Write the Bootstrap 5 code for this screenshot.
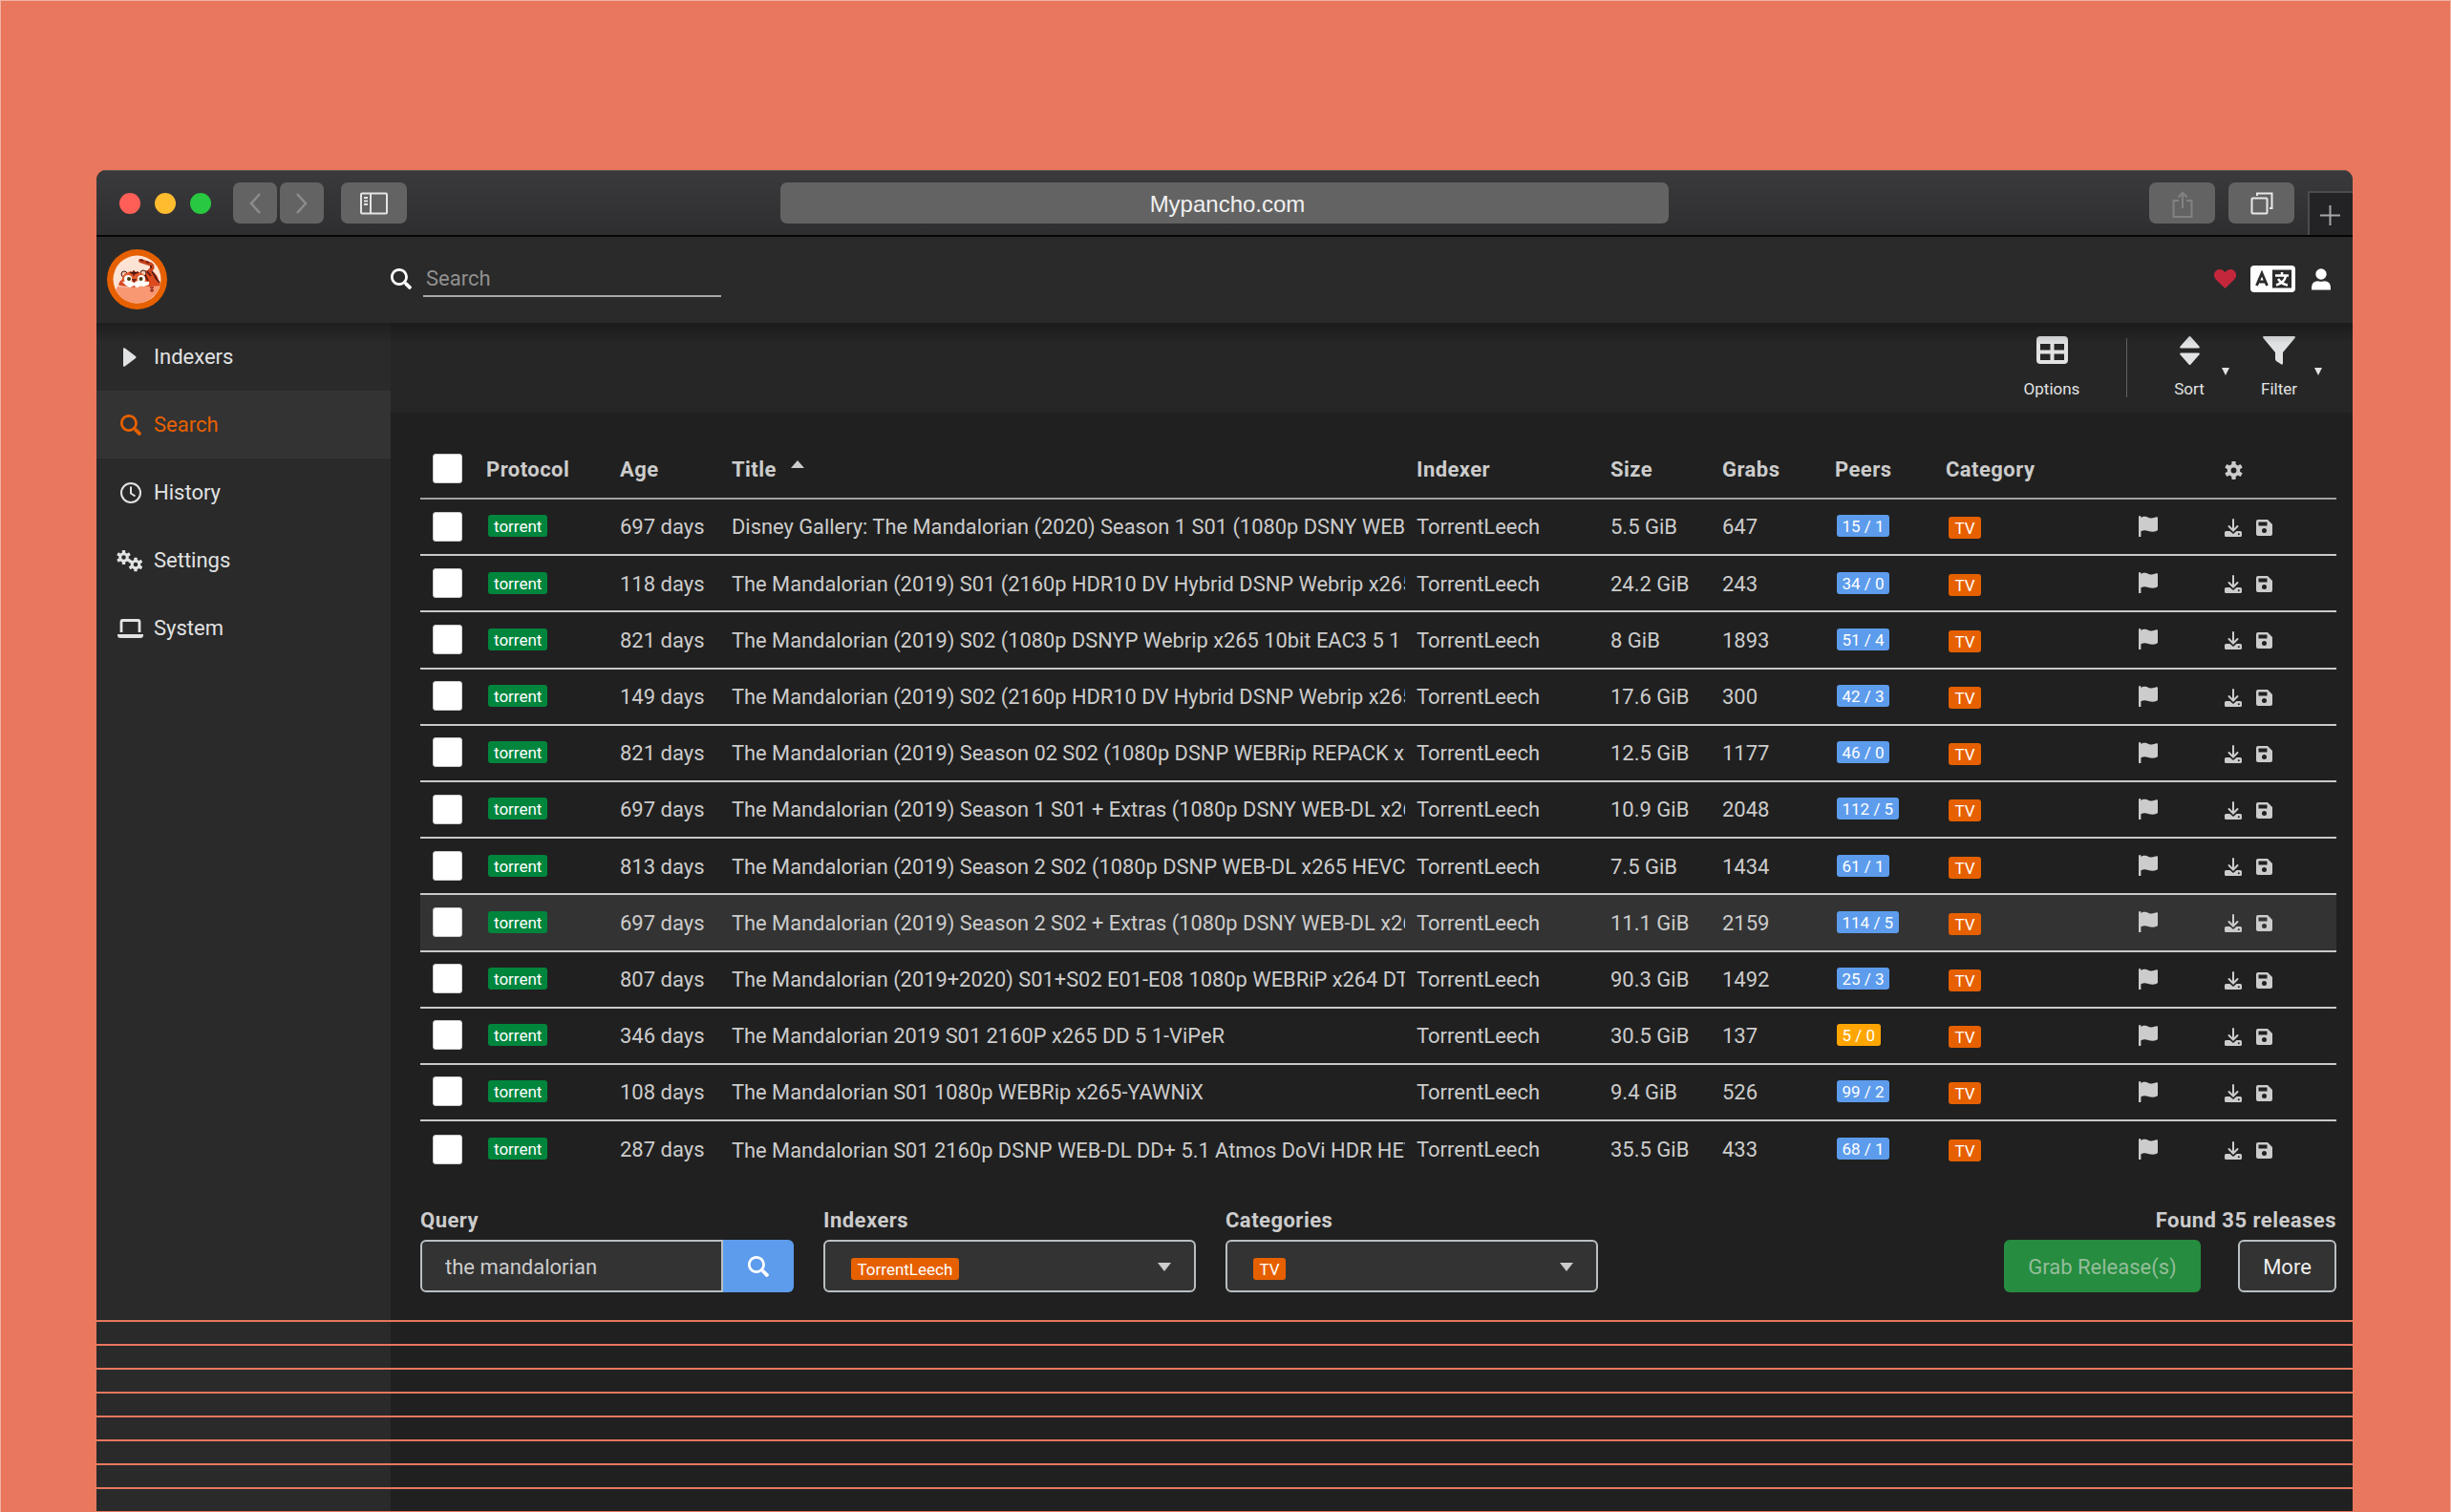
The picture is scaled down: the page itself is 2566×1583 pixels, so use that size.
<!DOCTYPE html>
<html lang="en">
<head>
<meta charset="utf-8">
<meta name="viewport" content="width=device-width, initial-scale=1">
<title>Mypancho.com</title>
<link href="https://cdn.jsdelivr.net/npm/bootstrap@5.3.0/dist/css/bootstrap.min.css" rel="stylesheet">
<style>
body{background:#e8775e;font-family:Roboto,"Open Sans",sans-serif;font-size:22px;line-height:1.2;color:#ccc;width:2566px;height:1583px;overflow:hidden;padding:178px 103px 0 101px;box-shadow:inset 1px 1px 0 #f0b3a5,inset -1px 0 0 #f0b3a5}
svg{display:block;flex:none}
.app-window{width:2362px;height:1405px;background:#202020;border-radius:10px 10px 0 0;overflow:hidden;position:relative}
.chrome{height:70px;background:linear-gradient(#3a3a3c,#2e2e30);border-top:1px solid #5a5353;border-bottom:2px solid #050505;padding-left:24px}
.dot{width:22px;height:22px;border-radius:50%;margin-right:15px}
.cbtn{height:43px;background:#636363;border-radius:7px;border:0}
.url{width:930px;height:43px;background:#636363;border-radius:7px;color:#f0f0f0;font:24px "Liberation Sans",Arial,sans-serif;padding:2px 0 0 6px}
.plus{width:47px;height:46px;background:#232326;border-left:2px solid #4c4c4f;border-top:2px solid #4c4c4f}
.topbar{height:90px;background:#2a2a2a;padding:0 23px 2px 11px}
.search-line{width:312px;height:39px;border-bottom:2px solid #a8a8a8;color:#909090;padding:7px 0 0 3px}
.side{width:308px;background:#2a2a2a;color:#e1e2e3;flex:none}
.side a{height:71px;color:inherit;text-decoration:none;padding-left:17px;padding-top:1px}
.side a.on{background:#333;color:#e66000}
.side .ic{width:43px;padding-right:5px}
.shade{position:absolute;top:160px;left:0;right:0;height:22px;background:linear-gradient(rgba(0,0,0,.28),rgba(0,0,0,0))}
.tools{height:94px;background:#262626;color:#e1e2e3;font-size:17px}
.tool{height:94px;padding-top:14px}
.tool .lbl{margin-top:16px;line-height:20px}
.content-pad{padding:0 17px 0 31px}
.rels{width:2006px;table-layout:fixed;border-collapse:separate;border-spacing:0;margin:0;white-space:nowrap}
.rels th{height:91px;padding:32px 0 0 0;border-bottom:2px solid #a0a0a0;font-weight:700;letter-spacing:.45px;vertical-align:middle}
.rels td{height:59.2px;padding:2px 0 0;border-bottom:2px solid #c9c9c9;vertical-align:middle}
.rels tr:last-child td{border-bottom:0}
.rels tr.hov td{background:#333}
.rels td:first-child{padding-top:0}
.rels th:first-child{padding-top:28px}
.box{width:31px;height:31px;background:#fff;border:1px solid #ccc;border-radius:3px;margin-left:12.500px;margin-top:-1px}
.tag{display:inline-block;font-size:17px;line-height:24px;height:23px;color:#fff;border-radius:3px;padding:0 5.500px;vertical-align:top}
.g{background:#00853d;padding:0 6px}.b{background:#5d9cec}.w{background:#ffa500}.o{background:#e66000}
.cut{width:705px;overflow:hidden;font-size:21.850px}
.field{height:55px;background:#333;border:2px solid #b9bfc2;border-radius:6px}
.lab{font-weight:700;letter-spacing:.48px;height:34px;line-height:28px}
.stripes{position:absolute;left:0;right:0;top:1204px;height:201px;background:repeating-linear-gradient(#e8775e 0 2px,transparent 2px 25px)}
</style>
</head>
<body>
<svg width="0" height="0" style="position:absolute"><defs>
<symbol id="mag" viewBox="0 0 512 512"><path fill="currentColor" d="M505 442.700L405.300 343c-4.500-4.500-10.600-7-17-7H372c27.600-35.300 44-79.700 44-128C416 93.100 322.900 0 208 0S0 93.100 0 208s93.100 208 208 208c48.300 0 92.700-16.400 128-44v16.300c0 6.400 2.500 12.500 7 17l99.700 99.700c9.400 9.400 24.600 9.400 33.900 0l28.300-28.300c9.400-9.400 9.400-24.600.1-34zM208 352c-79.500 0-144-64.500-144-144S128.500 64 208 64s144 64.500 144 144-64.500 144-144 144z"/></symbol>
<symbol id="cog" viewBox="-12 -12 24 24"><g fill="currentColor"><path fill-rule="evenodd" d="M0-8.500A8.500 8.500 0 1 1 0 8.500 8.500 8.500 0 0 1 0-8.500ZM0-3.700A3.700 3.700 0 1 0 0 3.700 3.700 3.700 0 0 0 0-3.700Z"/><g id="teeth"><rect x="-2.700" y="-12" width="5.400" height="5" rx="1"/><rect x="-2.700" y="7" width="5.400" height="5" rx="1"/></g><use href="#teeth" transform="rotate(60)"/><use href="#teeth" transform="rotate(120)"/></g></symbol>
<symbol id="flag" viewBox="0 0 20 22"><path fill="currentColor" d="M0 1.200A1.200 1.200 0 0 1 2.400 1.200V2.100C5-.2 8 .9 10.500 1.900 13.500 3 16 2.300 18.600 1.300Q20 .9 20 2.200V14.500Q20 15.300 19 15.700C16 17.100 13 16.900 10 15.900 7.300 15 5 14.900 2.400 16.300V21.500Q2.400 22 1.800 22H.6Q0 22 0 21.400Z"/></symbol>
<symbol id="dl" viewBox="0 0 18 19"><path fill="none" stroke="currentColor" stroke-width="2" stroke-linecap="round" d="M9 1V12M4.500 8 9 12.500 13.500 8"/><path fill="currentColor" fill-rule="evenodd" d="M1.500 13H5.500L9 16 12.500 13H16.500Q18 13 18 14.500V17.500Q18 19 16.500 19H1.500Q0 19 0 17.500V14.500Q0 13 1.500 13ZM14.800 15.200A1 1 0 1 0 14.800 17.200 1 1 0 1 0 14.800 15.200Z"/></symbol>
<symbol id="sv" viewBox="0 0 17 17"><path fill="currentColor" fill-rule="evenodd" d="M2 0H12L17 5V15Q17 17 15 17H2Q0 17 0 15V2Q0 0 2 0ZM2.500 2.500V6.500H11.500V2.500ZM8.500 9A2.500 2.500 0 1 0 8.500 14 2.500 2.500 0 1 0 8.500 9Z"/></symbol>
</defs></svg>
<div class="app-window">
 <div class="chrome d-flex align-items-center">
  <div class="dot" style="background:#ff5f57"></div><div class="dot" style="background:#febc2e"></div><div class="dot" style="background:#28c840"></div>
  <div class="cbtn d-flex align-items-center justify-content-center" style="width:46px;margin-left:8px"><svg width="14" height="24" fill="none" stroke="#8c8c8c" stroke-width="2.500"><path d="M12 2 3 12 12 22"/></svg></div>
  <div class="cbtn d-flex align-items-center justify-content-center" style="width:46px;margin-left:3px"><svg width="14" height="24" fill="none" stroke="#8c8c8c" stroke-width="2.500"><path d="M2 2 11 12 2 22"/></svg></div>
  <div class="cbtn d-flex align-items-center justify-content-center" style="width:69px;margin-left:18px"><svg width="30" height="24" fill="none" stroke="#e4e4e4" stroke-width="2"><rect x="1" y="1.500" width="27" height="21" rx="1"/><path d="M11 1V23M4 6H8M4 9.500H8M4 13H8"/></svg></div>
  <div class="url d-flex align-items-center justify-content-center" style="margin-left:391px">Mypancho.com</div>
  <div class="cbtn d-flex align-items-center justify-content-center ms-auto" style="width:69px"><svg width="22" height="28" fill="none" stroke="#828282" stroke-width="2" style="margin-top:3px"><path d="M7 10H1.500V27H20.500V10H15M11 18V2M6.500 6.500 11 1.700 15.500 6.500"/></svg></div>
  <div class="cbtn d-flex align-items-center justify-content-center" style="width:69px;margin-left:14px"><svg width="24" height="24" fill="none" stroke="#e8e8e8" stroke-width="2"><rect x="1.500" y="6.500" width="16" height="16" rx="1"/><path d="M7 4V1.500H22.500V17H20"/></svg></div>
  <div class="plus d-flex align-items-center justify-content-center align-self-end" style="margin-left:14px"><svg width="21" height="21" stroke="#a8a8a8" stroke-width="2" style="margin:3px 3px 0 0"><path d="M10.500 0V21M0 10.500H21"/></svg></div>
 </div>
 <div class="topbar d-flex align-items-center">
  <svg width="63" height="63" viewBox="0 0 63 63"><circle cx="31.500" cy="31.500" r="31.500" fill="#e66000"/><circle cx="31.500" cy="31.500" r="25" fill="#fde3d4"/><path d="M11 39 29 40 53 36 56 34A25 25 0 0 1 9 43Z" fill="#f79873"/><path d="M34 30C35 20 48 19 53 29L56 38 45 39 38 38Z" fill="#dc4a20"/><path d="M45 22C49 20 48 16 44 15L35 12" fill="none" stroke="#c9421c" stroke-width="4" stroke-linecap="round"/><path d="M35 11 38 12M41 13 44 14M46 17V20M42 23 46 28M47 23 52 31M39 25 43 33M50 29 55 35" stroke="#55190f" stroke-width="1.700" fill="none"/><path d="M12 37Q15 28 25 29L33 36 29 40 13 38Z" fill="#d94b25"/><circle cx="18" cy="26" r="3" fill="#f4c9b0" stroke="#421710"/><circle cx="38" cy="25" r="3" fill="#f4c9b0" stroke="#421710"/><ellipse cx="28" cy="30.500" rx="12" ry="7.500" fill="#e05b2c"/><path d="M24 24 28 26 33 24M28 22V28" stroke="#5a1a10" stroke-width="1.500"/><circle cx="22" cy="31" r="4" fill="#fff"/><circle cx="36" cy="31" r="4" fill="#fff"/><path d="M16 34 25 33 28 35 32 33 44 34 44 37 38 39 35 37 32 40 28 38 24 40 20 38Z" fill="#fff"/><circle cx="23" cy="31" r="2" fill="#493b0d"/><circle cx="35.500" cy="31" r="2" fill="#493b0d"/><path d="M26 31H31L28.500 35Z" fill="#6b2015"/><path d="M45 40H49M47 40V45M45 43H49" stroke="#9b2e20" stroke-width="1.300"/></svg>
  <svg width="22" height="22" style="color:#fff;margin-left:234px;margin-top:-1px"><use href="#mag"/></svg>
  <div class="search-line" style="margin-left:12px;margin-top:-1px">Search</div>
  <svg class="ms-auto" width="23" height="20" viewBox="0 0 23 20"><path fill="#c4273c" d="M11.500 20 1.800 10.500C-1 7.500-.5 3.500 2 1.500 4.800-.8 8.500-.3 11.500 3 14.500-.3 18.200-.8 21 1.500 23.500 3.500 24 7.500 21.200 10.500Z"/></svg>
  <svg width="47" height="28" viewBox="0 0 47 28" style="margin-left:15px"><rect width="47" height="28" rx="4" fill="#fff"/><rect x="23" y="4.500" width="20" height="19" fill="#2a2a2a"/><path d="M6.500 21 12 8 17.500 21M8.500 17H15.500" fill="none" stroke="#2a2a2a" stroke-width="2.800"/><path d="M26 10.500H40M33 7V10.500M37 11C36 16 32 19 27 20.500M29 14C31 17 35 20 39 20.500" fill="none" stroke="#fff" stroke-width="2.500"/></svg>
  <svg width="20" height="23" viewBox="0 0 20 23" style="margin-left:17px"><circle cx="10" cy="6" r="5.700" fill="#fff"/><path fill="#fff" d="M0 22.500V20Q0 13.500 7 13.200 10 14.300 13 13.200 20 13.500 20 20V22.500Z"/></svg>
 </div>
 <div class="d-flex" style="height:1245px">
  <nav class="side">
   <a href="#" class="d-flex align-items-center"><span class="ic d-flex justify-content-center"><svg width="14" height="20" viewBox="0 0 14 20" style="margin-right:2px"><path fill="currentColor" d="M0 1.500Q0-.5 1.800.6L13 9Q14 10 13 11L1.800 19.400Q0 20.500 0 18.500Z"/></svg></span>Indexers</a>
   <a href="#" class="d-flex align-items-center on"><span class="ic d-flex justify-content-center"><svg width="22" height="22"><use href="#mag"/></svg></span>Search</a>
   <a href="#" class="d-flex align-items-center"><span class="ic d-flex justify-content-center"><svg width="22" height="22" fill="none" stroke="currentColor" stroke-width="2"><circle cx="11" cy="11" r="10"/><path d="M11 4.500V11.500L15.500 14.500"/></svg></span>History</a>
   <a href="#" class="d-flex align-items-center"><span class="ic d-flex justify-content-center"><svg width="28" height="23" style="margin-right:3px"><use href="#cog" x="0" y="0" width="15" height="15"/><use href="#cog" x="12.500" y="7.500" width="15" height="15"/></svg></span>Settings</a>
   <a href="#" class="d-flex align-items-center"><span class="ic d-flex justify-content-center"><svg width="27" height="20" style="margin-right:2px"><path d="M4 14V3Q4 1.500 5.500 1.500H21.500Q23 1.500 23 3V14" fill="none" stroke="currentColor" stroke-width="2.800"/><path d="M0 16H27V17Q27 20 24 20H3Q0 20 0 17Z" fill="currentColor"/></svg></span>System</a>
  </nav>
  <main class="flex-grow-1">
   <div class="tools d-flex justify-content-end">
    <div class="tool d-flex flex-column align-items-center" style="width:80px"><svg width="33" height="29"><path fill="currentColor" fill-rule="evenodd" d="M4 0H29Q33 0 33 4V25Q33 29 29 29H4Q0 29 0 25V4Q0 0 4 0ZM4 8V14.500H14.500V8ZM18.500 8V14.500H29V8ZM4 18.500V25H14.500V18.500ZM18.500 18.500V25H29V18.500Z"/></svg><div class="lbl">Options</div></div>
    <div style="width:1px;height:62px;background:#626262;margin:16px 35px 0 38px"></div>
    <div class="tool d-flex flex-column align-items-center" style="width:60px"><svg width="21" height="30"><path fill="currentColor" d="M1.500 12.500Q-.8 12.500.7 10.600L9.500.6Q10.500-.4 11.500.6L20.300 10.600Q21.800 12.500 19.500 12.500ZM1.500 17.500H19.500Q21.800 17.500 20.300 19.400L11.500 29.400Q10.500 30.400 9.500 29.400L.7 19.400Q-.8 17.500 1.500 17.500Z"/></svg><div class="lbl" style="margin-top:15px">Sort</div></div>
    <svg width="8" height="8" style="margin:47px 0 0 4px"><path fill="currentColor" d="M0 0H8L4 8Z"/></svg>
    <div class="tool d-flex flex-column align-items-center" style="width:60px;margin-left:22px"><svg width="34" height="30"><path fill="currentColor" d="M1.500 0H32.500Q34.800 0 33.500 2L21 17V28Q21 30.500 19 29.300L14 26Q13 25 13 24V17L.5 2Q-.8 0 1.500 0Z"/></svg><div class="lbl" style="margin-top:15px">Filter</div></div>
    <svg width="8" height="8" style="margin:47px 32px 0 7px"><path fill="currentColor" d="M0 0H8L4 8Z"/></svg>
   </div>
   <div class="content-pad">
    <table class="rels">
     <colgroup><col style="width:69px"><col style="width:140px"><col style="width:117px"><col style="width:717px"><col style="width:203px"><col style="width:117px"><col style="width:118px"><col style="width:116px"><col style="width:203px"><col style="width:88px"><col></colgroup>
     <thead><tr><th><div class="box"></div></th><th>Protocol</th><th>Age</th><th>Title<svg width="14" height="8" style="display:inline-block;margin:-14px 0 0 15px"><path fill="currentColor" d="M7 0 14 8H0Z"/></svg></th><th>Indexer</th><th>Size</th><th>Grabs</th><th>Peers</th><th>Category</th><th></th><th><svg width="19" height="19" style="margin-left:1px"><use href="#cog"/></svg></th></tr></thead>
     <tbody id="rows"></tbody>
    </table>
    <div class="d-flex" style="margin-top:31px">
     <div style="width:391px"><div class="lab">Query</div><div class="d-flex field-row"><div class="field d-flex align-items-center" style="width:317px;border-radius:6px 0 0 6px;padding-left:24px;padding-top:2px">the mandalorian</div><div class="d-flex align-items-center justify-content-center" style="width:74px;height:55px;background:#5d9cec;border-radius:0 6px 6px 0;color:#fff"><svg width="22" height="22"><use href="#mag"/></svg></div></div></div>
     <div style="width:390px;margin-left:31px"><div class="lab">Indexers</div><div class="field d-flex align-items-center" style="padding:0 24px 0 27px"><span class="tag o" style="margin-top:5px;padding:0 6.500px">TorrentLeech</span><svg class="ms-auto" width="14" height="9" style="margin-top:2px"><path fill="currentColor" d="M0 0H14L7 9Z"/></svg></div></div>
     <div style="width:390px;margin-left:31px"><div class="lab">Categories</div><div class="field d-flex align-items-center" style="padding:0 24px 0 27px"><span class="tag o" style="margin-top:5px;padding:0 6.500px">TV</span><svg class="ms-auto" width="14" height="9" style="margin-top:2px"><path fill="currentColor" d="M0 0H14L7 9Z"/></svg></div></div>
     <div class="ms-auto"><div class="lab text-end">Found 35 releases</div><div class="d-flex justify-content-end"><div class="d-flex align-items-center justify-content-center" style="width:206px;height:55px;border-radius:6px;background:#268c3f;color:#93bd9b;padding-top:2px">Grab Release(s)</div><div class="field d-flex align-items-center justify-content-center" style="width:103px;margin-left:39px;color:#eee;padding-top:2px">More</div></div></div>
    </div>
   </div>
  </main>
 </div>
 <div class="shade"></div>
 <div class="stripes"></div>
</div>
<script>
const data=[
["697","Disney Gallery: The Mandalorian (2020) Season 1 S01 (1080p DSNY WEB","5.5 GiB","647","15 / 1"],
["118","The Mandalorian (2019) S01 (2160p HDR10 DV Hybrid DSNP Webrip x265","24.2 GiB","243","34 / 0"],
["821","The Mandalorian (2019) S02 (1080p DSNYP Webrip x265 10bit EAC3 5 1","8 GiB","1893","51 / 4"],
["149","The Mandalorian (2019) S02 (2160p HDR10 DV Hybrid DSNP Webrip x265","17.6 GiB","300","42 / 3"],
["821","The Mandalorian (2019) Season 02 S02 (1080p DSNP WEBRip REPACK x2","12.5 GiB","1177","46 / 0"],
["697","The Mandalorian (2019) Season 1 S01 + Extras (1080p DSNY WEB-DL x26","10.9 GiB","2048","112 / 5"],
["813","The Mandalorian (2019) Season 2 S02 (1080p DSNP WEB-DL x265 HEVC","7.5 GiB","1434","61 / 1"],
["697","The Mandalorian (2019) Season 2 S02 + Extras (1080p DSNY WEB-DL x26","11.1 GiB","2159","114 / 5"],
["807","The Mandalorian (2019+2020) S01+S02 E01-E08 1080p WEBRiP x264 DT","90.3 GiB","1492","25 / 3"],
["346","The Mandalorian 2019 S01 2160P x265 DD 5 1-ViPeR","30.5 GiB","137","5 / 0"],
["108","The Mandalorian S01 1080p WEBRip x265-YAWNiX","9.4 GiB","526","99 / 2"],
["287","The Mandalorian S01 2160p DSNP WEB-DL DD+ 5.1 Atmos DoVi HDR HEV","35.5 GiB","433","68 / 1"]];
document.getElementById("rows").innerHTML=data.map((r,i)=>`<tr class="${i==7?'hov':''}"><td><div class="box"></div></td><td><span class="tag g" style="margin-left:2px">torrent</span></td><td>${r[0]} days</td><td><div class="cut">${r[1]}</div></td><td>TorrentLeech</td><td>${r[2]}</td><td>${r[3]}</td><td><span class="tag ${i==9?'w':'b'}" style="margin-left:2px">${r[4]}</span></td><td><span class="tag o" style="margin:2px 0 0 3px;padding:0 6.500px">TV</span></td><td><svg width="20" height="22" style="margin:-3px 0 0 -1px"><use href="#flag"/></svg></td><td><div class="d-flex align-items-center" style="gap:15px;margin-left:1px"><svg width="18" height="19"><use href="#dl"/></svg><svg width="17" height="17"><use href="#sv"/></svg></div></td></tr>`).join("");
</script>
<script src="https://cdn.jsdelivr.net/npm/bootstrap@5.3.0/dist/js/bootstrap.bundle.min.js"></script>
</body>
</html>
